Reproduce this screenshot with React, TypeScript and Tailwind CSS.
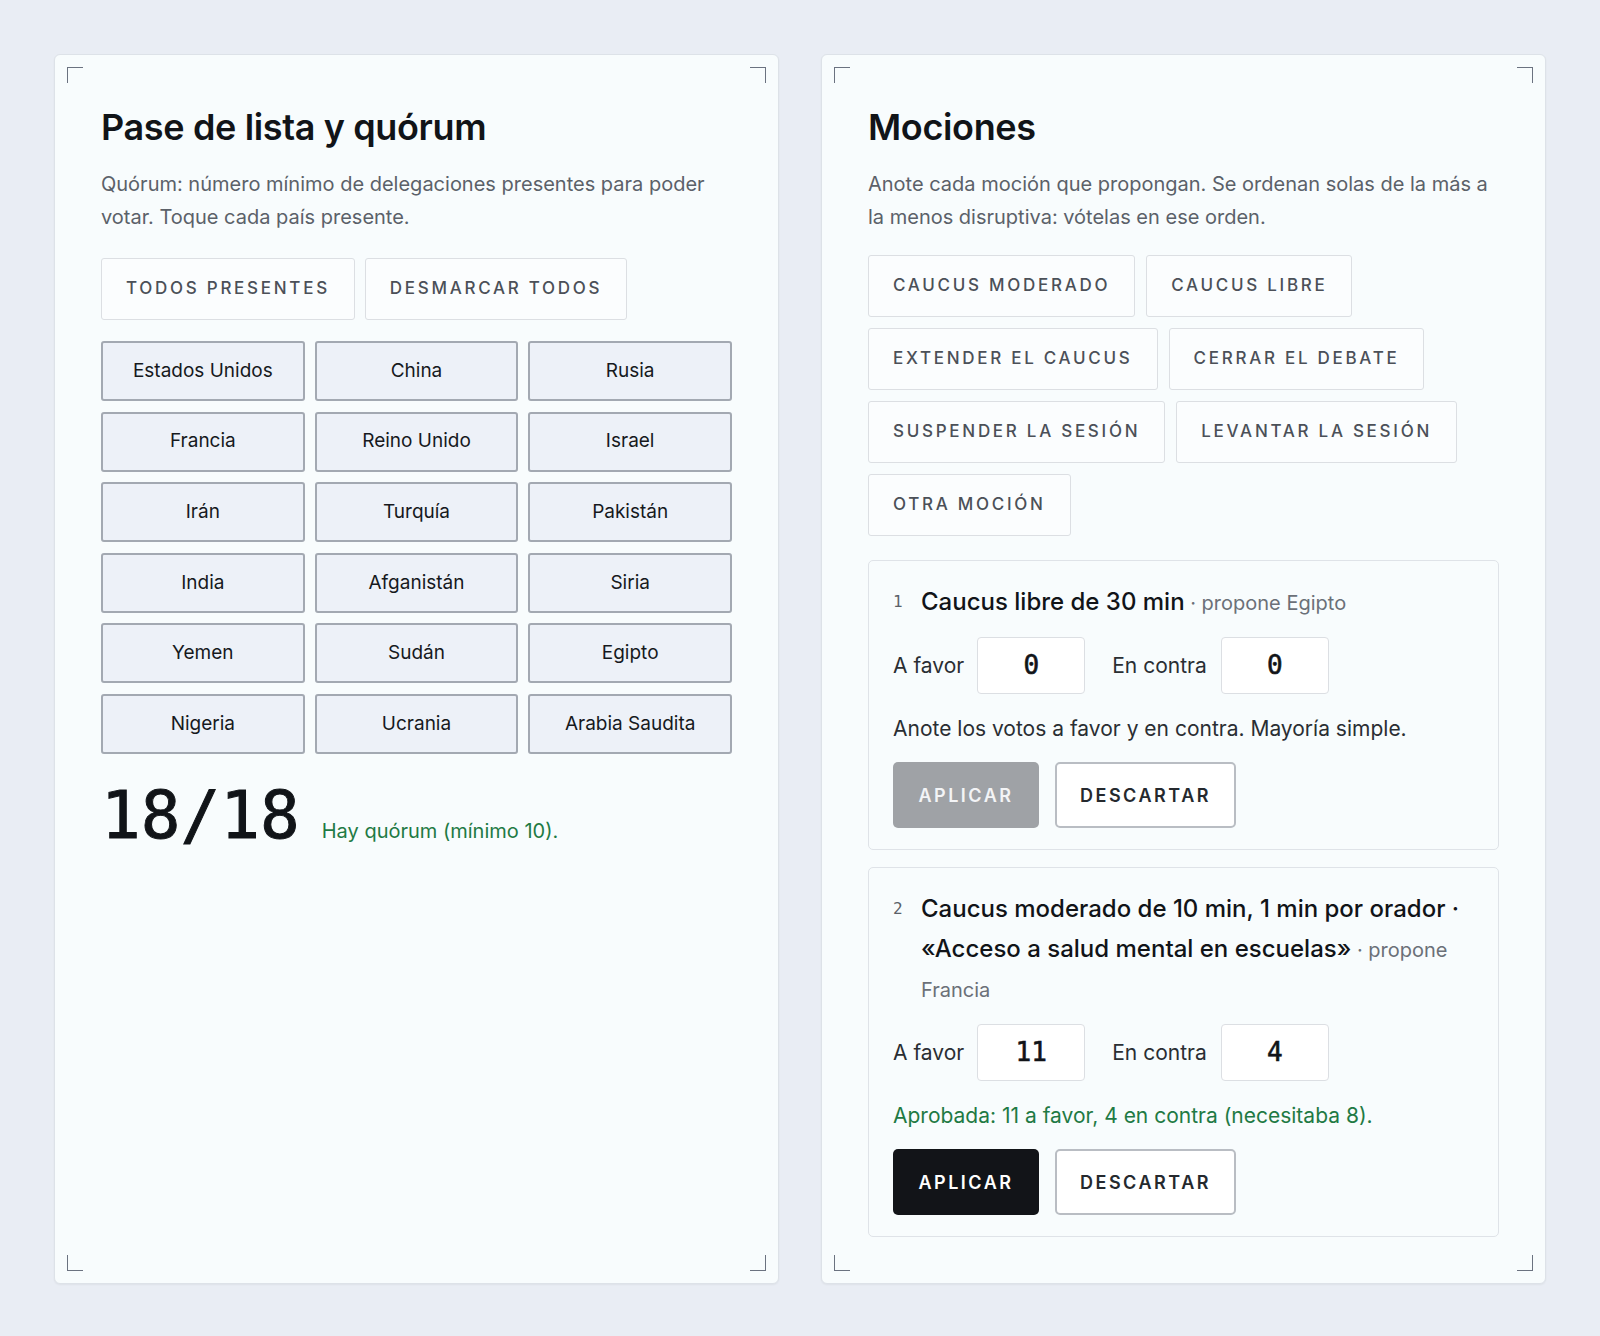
import React, { useState } from 'react';

interface Motion {
  id: number;
  title: string;
  proposer: string;
  favor: number;
  contra: number;
}

const paises = [
  'Estados Unidos', 'China', 'Rusia',
  'Francia', 'Reino Unido', 'Israel',
  'Irán', 'Turquía', 'Pakistán',
  'India', 'Afganistán', 'Siria',
  'Yemen', 'Sudán', 'Egipto',
  'Nigeria', 'Ucrania', 'Arabia Saudita',
];

const tiposMocion = [
  'Caucus moderado',
  'Caucus libre',
  'Extender el caucus',
  'Cerrar el debate',
  'Suspender la sesión',
  'Levantar la sesión',
  'Otra moción',
];

const sans = "font-['Inter','Noto_Sans',sans-serif]";
const mono = "font-['DejaVu_Sans_Mono','Liberation_Mono',monospace]";

// Marcas de esquina decorativas
const Corners: React.FC = () => (
  <>
    <span className="absolute top-3 left-3 w-4 h-4 border-t-[1.5px] border-l-[1.5px] border-[#6b7280]" />
    <span className="absolute top-3 right-3 w-4 h-4 border-t-[1.5px] border-r-[1.5px] border-[#6b7280]" />
    <span className="absolute bottom-3 left-3 w-4 h-4 border-b-[1.5px] border-l-[1.5px] border-[#6b7280]" />
    <span className="absolute bottom-3 right-3 w-4 h-4 border-b-[1.5px] border-r-[1.5px] border-[#6b7280]" />
  </>
);

const Panel: React.FC<{ title: string; desc: string; gap: string; children: React.ReactNode }> = ({ title, desc, gap, children }) => (
  <section className="relative bg-[#f8fcfd] border border-[#dde2e8] rounded-md shadow-[0_1px_2px_rgba(0,0,0,0.05)] px-[46px] pt-[51px] pb-[46px]">
    <Corners />
    <h2 className="text-[36px] leading-[42px] font-semibold text-[#111418] tracking-[-0.01em]">{title}</h2>
    <p className={`mt-5 text-[20px] leading-[33px] text-[#5b6169] ${gap}`}>{desc}</p>
    {children}
  </section>
);

const App: React.FC = () => {
  const [presentes, setPresentes] = useState<string[]>(paises);
  const [mociones] = useState<Motion[]>([
    { id: 1, title: 'Caucus libre de 30 min', proposer: 'Egipto', favor: 0, contra: 0 },
    { id: 2, title: 'Caucus moderado de 10 min, 1 min por orador · «Acceso a salud mental en escuelas»', proposer: 'Francia', favor: 11, contra: 4 },
  ]);

  const toggle = (p: string) =>
    setPresentes(prev => (prev.includes(p) ? prev.filter(x => x !== p) : [...prev, p]));

  return (
    <div className={`min-h-screen bg-[#e9edf4] p-[54px] grid grid-cols-2 gap-[42px] ${sans}`}>

      {/* Pase de lista */}
      <Panel
        title="Pase de lista y quórum"
        desc="Quórum: número mínimo de delegaciones presentes para poder votar. Toque cada país presente."
        gap="mb-[24px]"
      >
        <div className="flex gap-[10px]">
          <button
            onClick={() => setPresentes(paises)}
            className="h-[62px] px-6 bg-[#fbfdfe] border-[1.5px] border-[#dcdfe3] rounded-[3px] text-[17px] font-medium tracking-[0.16em] text-[#4b5058]"
          >
            TODOS PRESENTES
          </button>
          <button
            onClick={() => setPresentes([])}
            className="h-[62px] px-6 bg-[#fbfdfe] border-[1.5px] border-[#dcdfe3] rounded-[3px] text-[17px] font-medium tracking-[0.16em] text-[#4b5058]"
          >
            DESMARCAR TODOS
          </button>
        </div>

        <div className="mt-[21px] grid grid-cols-3 gap-x-[10px] gap-y-[10.6px]">
          {paises.map(p => (
            <button
              key={p}
              onClick={() => toggle(p)}
              className={`h-[60px] rounded-[3px] border-2 text-[19px] ${
                presentes.includes(p)
                  ? 'bg-[#edf1f8] border-[#a3a9b2] text-[#16191d]'
                  : 'bg-white border-[#d5d9df] text-[#8a9099]'
              }`}
            >
              {p}
            </button>
          ))}
        </div>

        <div className="mt-[30px] flex items-baseline gap-[22px]">
          <span className={`${mono} text-[66px] leading-[64px] text-[#111418] [-webkit-text-stroke:1px_#111418]`}>
            {presentes.length}/{paises.length}
          </span>
          <span className="text-[20px] text-[#1f7a44]">Hay quórum (mínimo 10).</span>
        </div>
      </Panel>

      {/* Mociones */}
      <Panel
        title="Mociones"
        desc="Anote cada moción que propongan. Se ordenan solas de la más a la menos disruptiva: vótelas en ese orden."
        gap="mb-[21px]"
      >
        <div className="flex flex-wrap gap-x-[11px] gap-y-[11px]">
          {tiposMocion.map(m => (
            <button
              key={m}
              className="h-[62px] px-6 bg-[#fbfdfe] border-[1.5px] border-[#dcdfe3] rounded-[3px] text-[17px] font-medium tracking-[0.16em] text-[#4b5058] uppercase"
            >
              {m}
            </button>
          ))}
        </div>

        <div className="mt-6 flex flex-col gap-[17px]">
          {mociones.map((m, i) => {
            const listo = m.favor + m.contra > 0;
            return (
              <div key={m.id} className="border-[1.5px] border-[#dfe3e8] rounded-[5px] px-6 pt-[21px] pb-[21px]">
                <div className="flex">
                  <span className={`${mono} w-[28px] shrink-0 text-[16px] leading-[40px] text-[#5b6169]`}>{i + 1}</span>
                  <p className="text-[24px] leading-[40px] font-medium text-[#111418]">
                    {m.title}
                    <span className="text-[20px] leading-none font-normal text-[#6b7078]"> · propone {m.proposer}</span>
                  </p>
                </div>

                <div className="mt-[15px] flex items-center text-[21px] text-[#2a2e33]">
                  <span>A favor</span>
                  <span className={`ml-[13px] w-[108px] h-[57px] flex items-center justify-center bg-white border-[1.5px] border-[#dcdfe3] rounded-[4px] ${mono} text-[26px] text-[#111418] [-webkit-text-stroke:0.6px_#111418]`}>
                    {m.favor}
                  </span>
                  <span className="ml-[27px]">En contra</span>
                  <span className={`ml-[14px] w-[108px] h-[57px] flex items-center justify-center bg-white border-[1.5px] border-[#dcdfe3] rounded-[4px] ${mono} text-[26px] text-[#111418] [-webkit-text-stroke:0.6px_#111418]`}>
                    {m.contra}
                  </span>
                </div>

                {listo ? (
                  <p className="mt-[18px] text-[21px] leading-[34px] text-[#1f7a44]">
                    Aprobada: {m.favor} a favor, {m.contra} en contra (necesitaba 8).
                  </p>
                ) : (
                  <p className="mt-[18px] text-[21px] leading-[34px] text-[#2a2e33]">
                    Anote los votos a favor y en contra. Mayoría simple.
                  </p>
                )}

                <div className="mt-[16px] flex gap-4">
                  <button
                    className={`w-[146px] h-[66px] rounded-[5px] text-[18px] font-semibold tracking-[0.14em] ${
                      listo ? 'bg-[#121418] text-white' : 'bg-[#9fa2a6] text-[#f3f4f6]'
                    }`}
                  >
                    APLICAR
                  </button>
                  <button className="w-[181px] h-[66px] rounded-[5px] bg-white border-2 border-[#b9bdc3] text-[18px] font-semibold tracking-[0.14em] text-[#25292e]">
                    DESCARTAR
                  </button>
                </div>
              </div>
            );
          })}
        </div>
      </Panel>
    </div>
  );
};

export default App;
